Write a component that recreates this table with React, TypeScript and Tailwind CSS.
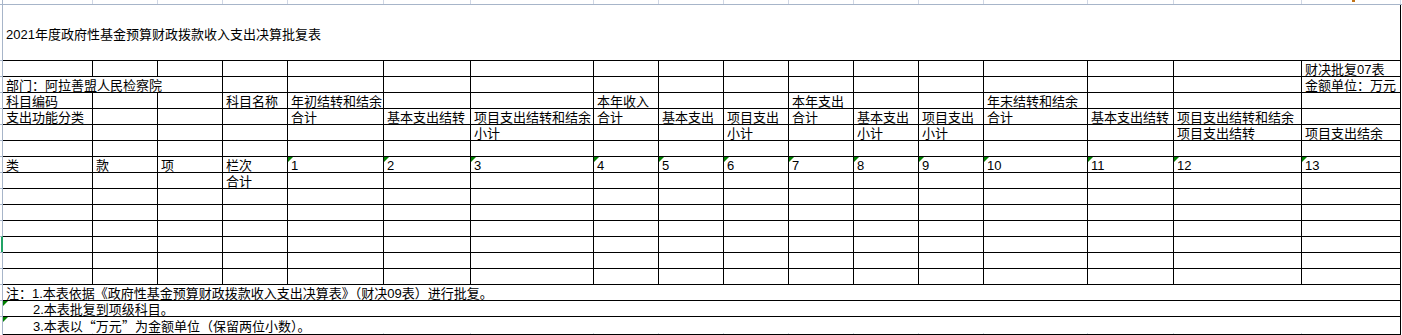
import clsx from 'clsx';
import type { ReactNode } from 'react';

const GRID =
  'grid grid-cols-[3px_89px_65px_65px_65px_96px_87px_123px_65px_65px_65px_65px_65px_65px_104px_86px_128px_100px]';

type CellDef = string | { t: ReactNode; span?: number; flag?: boolean; indent?: boolean };

const blank = (n: number): CellDef[] => Array.from({ length: n }, () => '');

const Quote = ({ children }: { children: string }) => (
  <span className="font-['Noto_Sans_CJK_SC',sans-serif] [font-feature-settings:'fwid']">{children}</span>
);

const rows: CellDef[][] = [
  [...blank(16), '财决批复07表'],
  [{ t: '部门：阿拉善盟人民检察院', span: 3 }, ...blank(13), '金额单位：万元'],
  ['科目编码', '', '', '科目名称', '年初结转和结余', '', '', '本年收入', '', '', '本年支出', '', '', '年末结转和结余', '', '', ''],
  ['支出功能分类', '', '', '', '合计', '基本支出结转', '项目支出结转和结余', '合计', '基本支出', '项目支出', '合计', '基本支出', '项目支出', '合计', '基本支出结转', '项目支出结转和结余', ''],
  ['', '', '', '', '', '', '小计', '', '', '小计', '', '小计', '小计', '', '', '项目支出结转', '项目支出结余'],
  blank(17),
  ['类', '款', '项', '栏次', ...Array.from({ length: 13 }, (_, i) => ({ t: String(i + 1), flag: true }))],
  ['', '', '', '合计', ...blank(13)],
  blank(17),
  blank(17),
  blank(17),
  blank(17),
  blank(17),
  blank(17),
  [{ t: '注：1.本表依据《政府性基金预算财政拨款收入支出决算表》（财决09表）进行批复。', span: 17 }],
  [{ t: '2.本表批复到项级科目。', span: 17, flag: true, indent: true }],
  [
    {
      t: (
        <>
          3.本表以<Quote>“</Quote>万元<Quote>”</Quote>为金额单位（保留两位小数）。
        </>
      ),
      span: 17,
      flag: true,
      indent: true,
    },
  ],
];

function Flag() {
  return (
    <span className="absolute left-0 top-0 h-0 w-0 border-t-[5px] border-r-[5px] border-t-[#008000] border-r-transparent" />
  );
}

function TableRow({ cells, last, marker }: { cells: CellDef[]; last: boolean; marker: boolean }) {
  let col = 0;
  return (
    <div className={clsx(GRID, last ? 'h-[17px]' : 'h-[16px]')}>
      <div
        className={clsx(
          'border-t border-r border-t-[#a7b5c9]',
          marker ? 'border-r-2 border-r-[#21a366]' : 'border-r-[#a7b5c9]',
        )}
      />
      {cells.map((c, i) => {
        const cell = typeof c === 'string' ? { t: c } : c;
        const span = cell.span ?? 1;
        const first = col === 0;
        col += span;
        const isLast = col === 17;
        return (
          <div
            key={i}
            className={clsx(
              'relative h-full whitespace-nowrap border-t border-black pt-[1px] text-[13px] leading-[15px] text-black',
              !first && 'border-l',
              isLast && 'border-r',
              last && 'border-b',
              span === 3 && 'col-span-3',
              span === 17 && 'col-span-17',
              cell.indent ? 'pl-[30px]' : 'pl-[3px]',
            )}
          >
            {cell.flag && <Flag />}
            {cell.t}
          </div>
        );
      })}
    </div>
  );
}

function GridStrip({ height, top }: { height: string; top?: boolean }) {
  return (
    <div className={clsx(GRID, height)}>
      <div className="border-r border-[#a7b5c9]" />
      {Array.from({ length: 17 }, (_, i) => (
        <div
          key={i}
          className={clsx(
            i > 0 && 'border-l border-[#d0d7e5]',
            i === 16 && 'border-r border-r-[#d0d7e5]',
          )}
        >
          {top && i === 16 && <div className="ml-[50px] h-[2px] w-[3px] bg-[#c27418]" />}
        </div>
      ))}
    </div>
  );
}

export default function App() {
  return (
    <div className="h-[335px] w-[1402px] overflow-hidden bg-white font-['Liberation_Sans','Noto_Sans_CJK_SC',sans-serif]">
      <div className="border-b border-[#a7b5c9]">
        <GridStrip height="h-[4px]" top />
      </div>

      <div className="flex h-[55px]">
        <div className="w-[3px] border-r border-[#a7b5c9]" />
        <div className="flex w-[1398px] items-center border-r border-black pl-[3px] pt-[3px] text-[13px] leading-[15px] text-black">
          2021年度政府性基金预算财政拨款收入支出决算批复表
        </div>
      </div>

      {rows.map((cells, i) => (
        <TableRow key={i} cells={cells} last={i === rows.length - 1} marker={i === 11} />
      ))}

      <GridStrip height="h-[2px]" />
    </div>
  );
}
